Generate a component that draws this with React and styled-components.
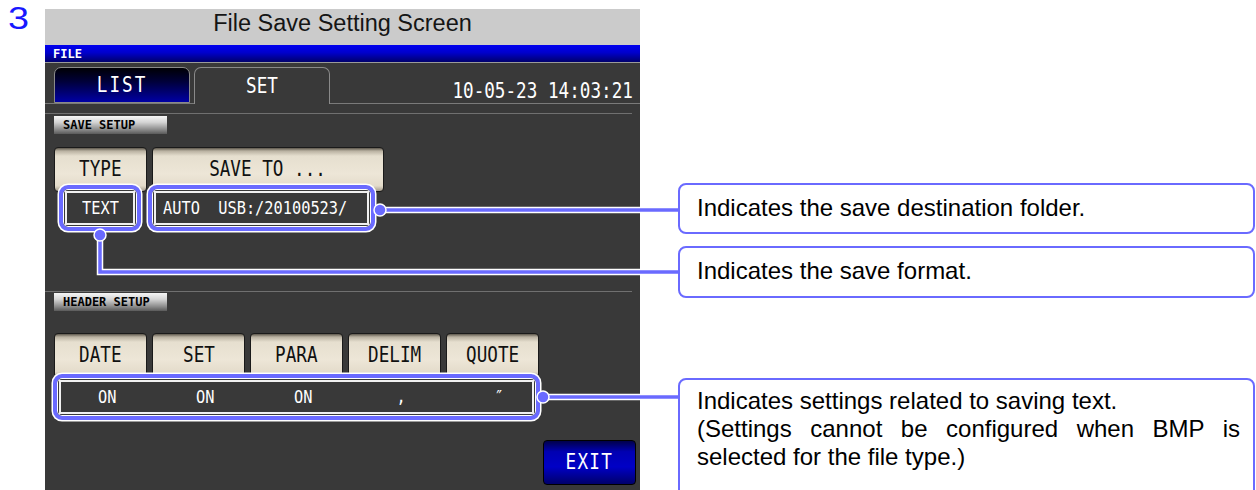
import React from 'react'
import styled, { createGlobalStyle } from 'styled-components'

const Global = createGlobalStyle`
  html, body { margin: 0; padding: 0; background: #fff; }
  body { font-family: "Liberation Sans", Arial, sans-serif; overflow: hidden; }
`

const BLUE = '#6a6aff'
const PANEL = '#393939'

const Page = styled.div`
  position: relative;
  width: 1256px;
  height: 490px;
  overflow: hidden;
  display: flex;
  align-items: flex-start;
`

const Step = styled.div`
  width: 45px;
  box-sizing: border-box;
  padding: 3px 0 0 8px;
  font-size: 31px;
  line-height: 32px;
  color: #1818ff;
`

const StepDigit = styled.span`
  display: inline-block;
  transform: scaleX(1.22);
  transform-origin: left;
`

const Screen = styled.div`
  width: 595px;
  height: 490px;
  display: flex;
  flex-direction: column;
`

const TitleBar = styled.div`
  margin-top: 9px;
  height: 36px;
  box-sizing: border-box;
  padding-top: 1px;
  background: #cbcbcb;
  text-align: center;
  font-size: 23.5px;
  line-height: 27px;
  color: #151515;
`

const ModeBar = styled.div`
  height: 17px;
  background: linear-gradient(#0000f0, #0000cc 45%, #00006c);
  border-bottom: 1px solid #9a9a9a;
  padding-left: 8px;
  display: flex;
  align-items: center;
`

const Panel = styled.div`
  flex: 1;
  background: ${PANEL};
  display: flex;
  flex-direction: column;
`

const Tiny = styled.span`
  font-family: "DejaVu Sans Mono", monospace;
  font-weight: bold;
  font-size: 12px;
  line-height: 12px;
  color: ${p => p.$color || '#000'};
`

const Lcd = styled.span`
  display: inline-block;
  font-family: "DejaVu Sans Mono", monospace;
  font-size: ${p => p.$size || 21}px;
  line-height: ${p => p.$size || 21}px;
  letter-spacing: ${p => p.$ls || 0}px;
  transform: scaleX(${p => p.$sx || 0.84});
  transform-origin: ${p => p.$origin || 'center'};
  white-space: pre;
  color: ${p => p.$color || '#111'};
`

const TabRow = styled.div`
  height: 41px;
  box-sizing: border-box;
  border-bottom: 1px solid #7a7a7a;
  padding: 0 7px 0 9px;
  display: flex;
  align-items: flex-end;
  gap: 4px;
`

const Tab = styled.div`
  width: 136px;
  box-sizing: border-box;
  height: ${p => (p.$active ? 37 : 36)}px;
  margin-bottom: ${p => (p.$active ? -1 : 0)}px;
  border: 1px solid #8a8a8a;
  border-bottom: ${p => (p.$active ? 'none' : '1px solid #8a8a8a')};
  border-radius: 7px 7px 0 0;
  background: ${p => (p.$active ? PANEL : 'linear-gradient(#000004, #00003a 40%, #0000a4)')};
  display: flex;
  align-items: center;
  justify-content: center;
`

const Clock = styled.div`
  margin-left: auto;
  margin-bottom: 1px;
  align-self: flex-end;
`

const Rule = styled.div`
  height: 1px;
  background: #707070;
  margin: ${p => p.$top}px 8px 0 0;
`

const SectionLabel = styled.div`
  width: 113px;
  height: 18px;
  box-sizing: border-box;
  margin: ${p => p.$top}px 0 0 9px;
  padding-left: 9px;
  background: linear-gradient(#f6f6f6, #d4d4d4 35%, #8c8c8c 75%, #5a5a5a);
  display: flex;
  align-items: center;
`

const KeyRow = styled.div`
  display: flex;
  gap: 5px;
  padding-left: 9px;
  margin-top: ${p => p.$top}px;
`

const Key = styled.div`
  box-sizing: border-box;
  width: ${p => p.$w}px;
  height: 45px;
  border: 1px solid #1a1a1a;
  border-radius: 4px;
  background: linear-gradient(#5d574c 0, #b9b1a1 3px, #e6dfcf 8px, #ede6d7 60%, #e4dccb 88%, #a59d8d 100%);
  display: flex;
  align-items: center;
  justify-content: center;
`

const ReadRow = styled.div`
  position: relative;
  z-index: 1;
  display: flex;
  gap: 7px;
  padding-left: ${p => p.$left}px;
  margin-top: ${p => p.$top}px;
`

const Ring = styled.div`
  box-sizing: border-box;
  width: ${p => p.$w}px;
  height: 46px;
  border: 4px solid ${BLUE};
  border-radius: 9px;
  box-shadow: 0 0 0 1.5px #fff, inset 0 0 0 1px #fff;
  padding: 2px;
  background: ${PANEL};
`

const Readout = styled.div`
  height: 100%;
  box-sizing: border-box;
  border: 2px solid #f0f0f0;
  background: ${PANEL};
  display: flex;
  align-items: center;
  justify-content: ${p => (p.$left ? 'flex-start' : 'center')};
  padding-left: ${p => (p.$left ? 7 : 0)}px;
`

const Cells = styled.div`
  flex: none;
  align-self: stretch;
  display: grid;
  grid-template-columns: repeat(5, 98px);
  margin-left: -10px;
`

const Cell = styled.div`
  display: flex;
  justify-content: center;
  align-items: center;
`

const ExitKey = styled.div`
  align-self: flex-end;
  margin: 20px 4px 0 0;
  width: 93px;
  height: 45px;
  box-sizing: border-box;
  border: 1px solid #000;
  border-radius: 4px;
  background: linear-gradient(#00004a, #0000b2 25%, #0000c6 60%, #00006a);
  display: flex;
  align-items: center;
  justify-content: center;
`

const Notes = styled.div`
  margin-left: 38px;
  width: 577px;
  display: flex;
  flex-direction: column;
`

const Note = styled.div`
  box-sizing: border-box;
  margin-top: ${p => p.$top}px;
  height: ${p => p.$h}px;
  border: 2px solid ${BLUE};
  border-radius: 8px;
  background: #fff;
  padding: ${p => (p.$multi ? '7px 13px 0 17px' : '0 13px 2px 17px')};
  display: flex;
  flex-direction: column;
  justify-content: ${p => (p.$multi ? 'flex-start' : 'center')};
  font-size: 24px;
  line-height: 28px;
  color: #000;
  white-space: nowrap;
`

const FullLine = styled.div`
  text-align: justify;
  text-align-last: justify;
`

const Wires = styled.svg`
  position: absolute;
  left: 0;
  top: 0;
  z-index: 2;
  pointer-events: none;
`

const wires = ['M380 210H678', 'M100 235V272H678', 'M543 397H678']
const dots = [[380, 210], [100, 235], [543, 397]]

const headerKeys = ['DATE', 'SET', 'PARA', 'DELIM', 'QUOTE']
const headerVals = ['ON', 'ON', 'ON', ',', '″']

const App = () => {
  return (
    <Page>
      <Global />
      <Step><StepDigit>3</StepDigit></Step>
      <Screen>
        <TitleBar>File Save Setting Screen</TitleBar>
        <ModeBar>
          <Tiny $color="#fff">FILE</Tiny>
        </ModeBar>
        <Panel>
          <TabRow>
            <Tab>
              <Lcd $color="#fff" $ls={2.4}>LIST</Lcd>
            </Tab>
            <Tab $active>
              <Lcd $color="#fff">SET</Lcd>
            </Tab>
            <Clock>
              <Lcd $color="#fff" $origin="right">10-05-23 14:03:21</Lcd>
            </Clock>
          </TabRow>

          <Rule $top={9} />
          <SectionLabel $top={2}>
            <Tiny>SAVE SETUP</Tiny>
          </SectionLabel>
          <KeyRow $top={13}>
            <Key $w={93}><Lcd>TYPE</Lcd></Key>
            <Key $w={232}><Lcd>SAVE TO ...</Lcd></Key>
          </KeyRow>
          <ReadRow $top={-7} $left={14}>
            <Ring $w={82}>
              <Readout>
                <Lcd $size={17} $sx={0.9} $color="#fff">TEXT</Lcd>
              </Readout>
            </Ring>
            <Ring $w={227}>
              <Readout $left>
                <Lcd $size={17} $sx={0.9} $color="#fff" $origin="left">AUTO  USB:/20100523/</Lcd>
              </Readout>
            </Ring>
          </ReadRow>

          <Rule $top={60} />
          <SectionLabel $top={1}>
            <Tiny>HEADER SETUP</Tiny>
          </SectionLabel>
          <KeyRow $top={22}>
            {headerKeys.map(k => (
              <Key key={k} $w={93}><Lcd>{k}</Lcd></Key>
            ))}
          </KeyRow>
          <ReadRow $top={-4} $left={8}>
            <Ring $w={487}>
              <Readout $left>
                <Cells>
                  {headerVals.map((v, i) => (
                    <Cell key={i}>
                      <Lcd $size={17} $sx={0.9} $color="#fff">{v}</Lcd>
                    </Cell>
                  ))}
                </Cells>
              </Readout>
            </Ring>
          </ReadRow>

          <ExitKey>
            <Lcd $color="#fff" $ls={1.5}>EXIT</Lcd>
          </ExitKey>
        </Panel>
      </Screen>

      <Notes>
        <Note $top={183} $h={51}>Indicates the save destination folder.</Note>
        <Note $top={12} $h={52}>Indicates the save format.</Note>
        <Note $top={80} $h={130} $multi>
          <div>Indicates settings related to saving text.</div>
          <FullLine>(Settings cannot be configured when BMP is</FullLine>
          <div>selected for the file type.)</div>
        </Note>
      </Notes>

      <Wires width="1256" height="490" viewBox="0 0 1256 490">
        {wires.map(d => (
          <path key={d + 'w'} d={d} fill="none" stroke="#fff" strokeWidth="6.5" />
        ))}
        {wires.map(d => (
          <path key={d} d={d} fill="none" stroke={BLUE} strokeWidth="3.5" />
        ))}
        {dots.map(([x, y]) => (
          <circle key={x} cx={x} cy={y} r="6" fill={BLUE} stroke="#fff" strokeWidth="1.5" />
        ))}
      </Wires>
    </Page>
  )
}

export default App
